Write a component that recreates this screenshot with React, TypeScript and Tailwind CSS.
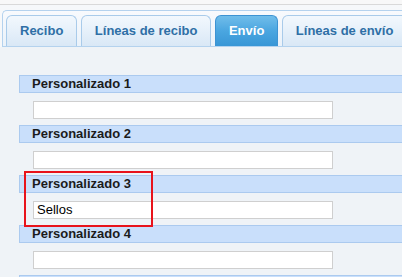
import React from 'react';

// --- TABS ---
const TABS = ["Recibo", "Líneas de recibo", "Envío", "Líneas de envío"];
const ACTIVE = "Envío";

// --- CUSTOM FIELDS ---
const FIELDS = [
  { label: "Personalizado 1", value: "" },
  { label: "Personalizado 2", value: "" },
  { label: "Personalizado 3", value: "Sellos" },
  { label: "Personalizado 4", value: "" },
];

export default function App() {
  return (
    <div className="relative w-[402px] h-[277px] overflow-hidden bg-[#eff3f7] font-['Liberation_Sans',Arial,sans-serif]">
      {/* TOP STRIP */}
      <div className="h-[5px] bg-[#f8f8f8] border-b border-[#d9d9d9]" />

      {/* TAB BAR */}
      <div className="pt-[5px] bg-[#f6f8fa]">
        <div className="ml-[2px] h-[37px] flex items-end gap-[3.5px] pl-[3px] border-l border-t border-b border-[#b4d2ee] rounded-tl-[5px] bg-gradient-to-b from-[#f8fafd] to-[#eaf2fa]">
          {TABS.map((t) => (
            <Tab key={t} label={t} active={t === ACTIVE} />
          ))}
        </div>
      </div>

      {/* FIELDS */}
      <div className="pt-[28px] flex flex-col">
        {FIELDS.map((f) => (
          <div key={f.label} className="flex flex-col">
            <div className="ml-[19px] h-[18px] flex items-center pl-[12px] bg-[#c9dffb] border-l border-y border-[#abcaef] text-[13px] font-bold text-[#1b1b1b]">
              {f.label}
            </div>
            <div className="mt-[8px] mb-[6px] ml-[33px] w-[300px] h-[18px] flex items-center pl-[3px] bg-white border border-[#cfcfcf] text-[13px] text-black">
              {f.value}
            </div>
          </div>
        ))}
        {/* next section header, cut by the window */}
        <div className="ml-[19px] h-[18px] bg-[#c9dffb] border-l border-y border-[#abcaef]" />
      </div>

      {/* HIGHLIGHT BOX */}
      <div className="absolute left-[24px] top-[171px] w-[129px] h-[56px] border-2 border-[#e8131b]" />
    </div>
  );
}

// --- SUB-COMPONENT: TAB ---
const Tab = ({ label, active }: { label: string; active: boolean }) => (
  <div
    className={`shrink-0 h-[31px] px-[13px] flex items-center rounded-t-[6px] border border-b-0 text-[13px] font-bold whitespace-nowrap ${
      active
        ? 'bg-gradient-to-b from-[#70bdea] via-[#4aa6e0] to-[#3896d6] border-[#3d93d3] text-white'
        : 'bg-gradient-to-b from-[#f2f8fd] via-[#e6f0fa] to-[#d9e8f6] border-[#a9cbea] text-[#2f6fa6]'
    }`}
  >
    {label}
  </div>
);
